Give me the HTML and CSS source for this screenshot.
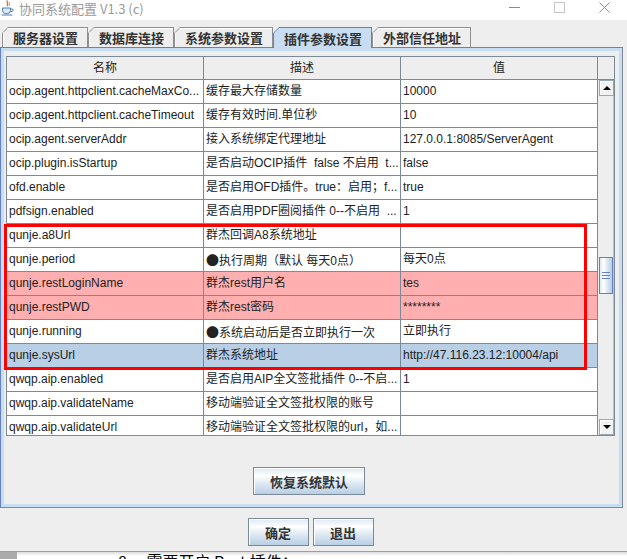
FILE: index.html
```html
<!DOCTYPE html>
<html lang="zh">
<head>
<meta charset="utf-8">
<title>协同系统配置 V1.3 (c)</title>
<link rel="stylesheet" href="styles.css">
</head>
<body>
<div class="titlebar">
  <svg class="app-icon" width="13" height="16" viewBox="0 0 13 16">
    <path d="M6.5 0.5 C4.5 2.5 8.5 3.5 6 6" fill="none" stroke="#e2571e" stroke-width="1.2"/>
    <path d="M8.5 2 C7.5 3.5 9.5 4 8 6" fill="none" stroke="#f0901e" stroke-width="1"/>
    <path d="M1.5 8 H9.5 V10.5 A3 3 0 0 1 6.5 13.5 H4.5 A3 3 0 0 1 1.5 10.5 Z" fill="#dfe8f2" stroke="#4f7db0" stroke-width="1"/>
    <path d="M9.5 9 H11 A1.2 1.2 0 0 1 11 11.4 H9.3" fill="none" stroke="#4f7db0" stroke-width="1"/>
    <path d="M0.5 15 H11.5" stroke="#4f7db0" stroke-width="1"/>
  </svg>
  <span class="title">协同系统配置 V1.3 (c)</span>
  <div class="controls">
    <svg class="ctl ctl-min" width="11" height="11" viewBox="0 0 11 11"><path d="M0 5.5 H11" stroke="#8c8c8c" stroke-width="1"/></svg>
    <svg class="ctl ctl-max" width="11" height="11" viewBox="0 0 11 11"><rect x="0.5" y="0.5" width="10" height="10" fill="none" stroke="#c4c4c4" stroke-width="1"/></svg>
    <svg class="ctl ctl-close" width="11" height="11" viewBox="0 0 11 11"><path d="M0.5 0.5 L10.5 10.5 M10.5 0.5 L0.5 10.5" stroke="#8c8c8c" stroke-width="1"/></svg>
  </div>
</div>

<div class="tabs">
  <div class="tab"><div class="tab-inner">服务器设置</div></div>
  <div class="tab"><div class="tab-inner">数据库连接</div></div>
  <div class="tab"><div class="tab-inner">系统参数设置</div></div>
  <div class="tab active"><div class="tab-inner">插件参数设置</div></div>
  <div class="tab"><div class="tab-inner">外部信任地址</div></div>
</div>

<div class="panel">
  <div class="scrollpane">
    <div class="thead">
      <div class="th">名称</div>
      <div class="th">描述</div>
      <div class="th">值</div>
    </div>
    <div class="corner"></div>
    <div class="viewport">
      <div class="row"><div class="td">ocip.agent.httpclient.cacheMaxCo...</div><div class="td">缓存最大存储数量</div><div class="td">10000</div></div>
      <div class="row"><div class="td">ocip.agent.httpclient.cacheTimeout</div><div class="td">缓存有效时间.单位秒</div><div class="td">10</div></div>
      <div class="row"><div class="td">ocip.agent.serverAddr</div><div class="td">接入系统绑定代理地址</div><div class="td">127.0.0.1:8085/ServerAgent</div></div>
      <div class="row"><div class="td">ocip.plugin.isStartup</div><div class="td">是否启动OCIP插件&nbsp; false 不启用&nbsp; t...</div><div class="td">false</div></div>
      <div class="row"><div class="td">ofd.enable</div><div class="td">是否启用OFD插件。true：启用；f...</div><div class="td">true</div></div>
      <div class="row"><div class="td">pdfsign.enabled</div><div class="td">是否启用PDF圈阅插件 0--不启用&nbsp; ...</div><div class="td">1</div></div>
      <div class="row"><div class="td">qunje.a8Url</div><div class="td">群杰回调A8系统地址</div><div class="td"></div></div>
      <div class="row"><div class="td">qunje.period</div><div class="td"><span class="bullet">●</span>执行周期（默认 每天0点）</div><div class="td">每天0点</div></div>
      <div class="row pink"><div class="td">qunje.restLoginName</div><div class="td">群杰rest用户名</div><div class="td">tes</div></div>
      <div class="row pink"><div class="td">qunje.restPWD</div><div class="td">群杰rest密码</div><div class="td">********</div></div>
      <div class="row"><div class="td">qunje.running</div><div class="td"><span class="bullet">●</span>系统启动后是否立即执行一次</div><div class="td">立即执行</div></div>
      <div class="row selected"><div class="td">qunje.sysUrl</div><div class="td">群杰系统地址</div><div class="td">http://47.116.23.12:10004/api</div></div>
      <div class="row"><div class="td">qwqp.aip.enabled</div><div class="td">是否启用AIP全文签批插件 0--不启...</div><div class="td">1</div></div>
      <div class="row"><div class="td">qwqp.aip.validateName</div><div class="td">移动端验证全文签批权限的账号</div><div class="td"></div></div>
      <div class="row"><div class="td">qwqp.aip.validateUrl</div><div class="td">移动端验证全文签批权限的url，如...</div><div class="td"></div></div>
    </div>
    <div class="vscroll">
      <div class="sb-btn"><span class="arrow-up"></span></div>
      <div class="sb-track"><div class="sb-thumb"><span></span><span></span><span></span></div></div>
      <div class="sb-btn"><span class="arrow-down"></span></div>
    </div>
  </div>
  <div class="reset-row"><button class="btn btn-wide">恢复系统默认</button></div>
</div>

<div class="footer">
  <button class="btn">确定</button>
  <button class="btn">退出</button>
</div>
<div class="frame-edge"></div>
<div class="doc"><div class="doc-side"></div><div class="doc-text">8、 需要开启 Rest 插件：</div></div>

<div class="highlight"></div>
</body>
</html>
```
FILE: styles.css
```css
* { box-sizing: border-box; }
html, body { margin: 0; padding: 0; }
body {
  width: 627px;
  height: 559px;
  overflow: hidden;
  position: relative;
  background: #eeeeee;
  font-family: "Liberation Sans", "Noto Sans CJK SC", sans-serif;
  font-size: 12px;
  color: #222;
}

/* title bar */
.titlebar {
  height: 20px;
  background: #ffffff;
  display: flex;
  align-items: flex-start;
}
.app-icon { flex: none; margin-left: 1px; }
.title {
  margin-left: 5px;
  font-family: "Noto Sans CJK SC", sans-serif;
  font-size: 13px;
  line-height: 18px;
  color: #9a9a9a;
  white-space: nowrap;
}
.controls {
  margin-left: auto;
  display: flex;
  padding-top: 2px;
  padding-right: 17px;
}
.ctl { display: block; flex: none; }
.ctl-min, .ctl-max { margin-right: 34px; }

/* tabs */
.tabs {
  display: flex;
  align-items: flex-start;
  height: 20px;
  margin-top: 7px;
  padding-left: 2px;
}
.tab {
  height: 20px;
  padding: 1px 1px 0 1px;
  background: #8e8e8e;
  clip-path: polygon(6px 0, 100% 0, 100% 100%, 0 100%, 0 6px);
}
.tab-inner {
  height: 100%;
  display: flex;
  align-items: center;
  padding: 0 9px 0 10px;
  background: #eeeeee;
  box-shadow: inset 1px 1px 0 #ffffff;
  clip-path: polygon(5px 0, 100% 0, 100% 100%, 0 100%, 0 5px);
  font-family: "Noto Sans CJK SC", sans-serif;
  font-weight: bold;
  font-size: 13px;
  color: #333;
  white-space: nowrap;
}
.tab.active {
  height: 21px;
  margin-bottom: -1px;
  background: #6382bf;
  position: relative;
  z-index: 1;
}
.tab.active .tab-inner {
  background: #c8ddf2;
  box-shadow: none;
}

/* panel */
.panel {
  width: 623px;
  height: 461px;
  border: 1px solid;
  border-color: #6382bf #7a8a99 #7a8a99 #6382bf;
  background: #eeeeee;
  box-shadow: inset 0 0 0 3px #c8ddf2;
  padding: 8px 7px 0 5px;
}
.scrollpane {
  width: 609px;
  height: 380px;
  border: 1px solid #7a8a99;
  display: grid;
  grid-template-columns: 591px 16px;
  grid-template-rows: 23px 355px;
  background: #ffffff;
}
.thead {
  display: grid;
  grid-template-columns: 197px 197px 197px;
}
.th {
  height: 23px;
  border-right: 1px solid #7a8a99;
  border-bottom: 1px solid #7a8a99;
  background: #eeeeee;
  text-align: center;
  line-height: 23px;
  color: #222;
}
.corner {
  background: #eeeeee;
  border-bottom: 1px solid #7a8a99;
}
.viewport {
  overflow: hidden;
  background: #ffffff;
}
.row {
  display: grid;
  grid-template-columns: 197px 197px 197px;
  height: 24px;
}
.row.pink { background: #ffafaf; }
.row.selected { background: #b8cfe5; }
.td {
  height: 24px;
  border-right: 1px solid #7a8a99;
  border-bottom: 1px solid #7a8a99;
  padding-left: 2px;
  line-height: 23px;
  white-space: nowrap;
  overflow: hidden;
}
.bullet {
  font-family: "Noto Sans CJK SC", sans-serif;
  font-size: 13px;
}

/* scrollbar */
.vscroll {
  display: flex;
  flex-direction: column;
  background: #eeeeee;
  border-left: 1px solid #eeeeee;
}
.sb-btn {
  height: 16px;
  flex: none;
  border: 1px solid #9aa6b3;
  background: #f2f2f2;
  box-shadow: inset 1px 1px 0 #ffffff;
  display: flex;
  align-items: center;
  justify-content: center;
}
.arrow-up {
  width: 0; height: 0;
  border-left: 4px solid transparent;
  border-right: 4px solid transparent;
  border-bottom: 4px solid #000;
}
.arrow-down {
  width: 0; height: 0;
  border-left: 4px solid transparent;
  border-right: 4px solid transparent;
  border-top: 4px solid #000;
}
.sb-track {
  flex: 1;
  border-right: 1px solid #b9c2cc;
}
.sb-thumb {
  margin-top: 161px;
  height: 37px;
  border: 1px solid #6382bf;
  background: linear-gradient(to right, #dde8f3 0%, #ffffff 30%, #dde8f3 60%, #b8cfe5 100%);
  display: flex;
  flex-direction: column;
  align-items: center;
  justify-content: center;
  gap: 2px;
}
.sb-thumb span {
  display: block;
  width: 8px;
  height: 1px;
  background: #6382bf;
}

/* buttons */
.reset-row {
  display: flex;
  justify-content: center;
  padding-top: 31px;
  padding-right: 3px;
}
.btn {
  height: 28px;
  width: 61px;
  padding: 0;
  border: 1px solid #7a8a99;
  background: linear-gradient(to bottom, #dde8f3 0%, #ffffff 30%, #dde8f3 60%, #b8cfe5 100%);
  box-shadow: inset 1px 1px 0 #ffffff;
  font-family: "Noto Sans CJK SC", sans-serif;
  font-weight: bold;
  font-size: 13px;
  color: #333;
}
.btn-wide { width: 112px; }

.footer {
  height: 43px;
  display: flex;
  justify-content: center;
  gap: 4px;
  padding-top: 10px;
  padding-right: 6px;
}
.frame-edge {
  height: 1px;
  background: #9d9d9d;
}
.doc {
  height: 8px;
  display: flex;
  background: linear-gradient(to bottom, #dcdcdc 0px, #ffffff 4px);
  overflow: hidden;
}
.doc-side {
  width: 17px;
  flex: none;
  background: #ababab;
}
.doc-text {
  padding-left: 101px;
  padding-top: 1px;
  font-family: "Noto Sans CJK SC", sans-serif;
  font-size: 16px;
  line-height: 16px;
  color: #000;
  white-space: nowrap;
}

/* annotation overlay */
.highlight {
  position: absolute;
  left: 4px;
  top: 224px;
  width: 583px;
  height: 146px;
  border: 3px solid #ff0000;
  pointer-events: none;
}
```
